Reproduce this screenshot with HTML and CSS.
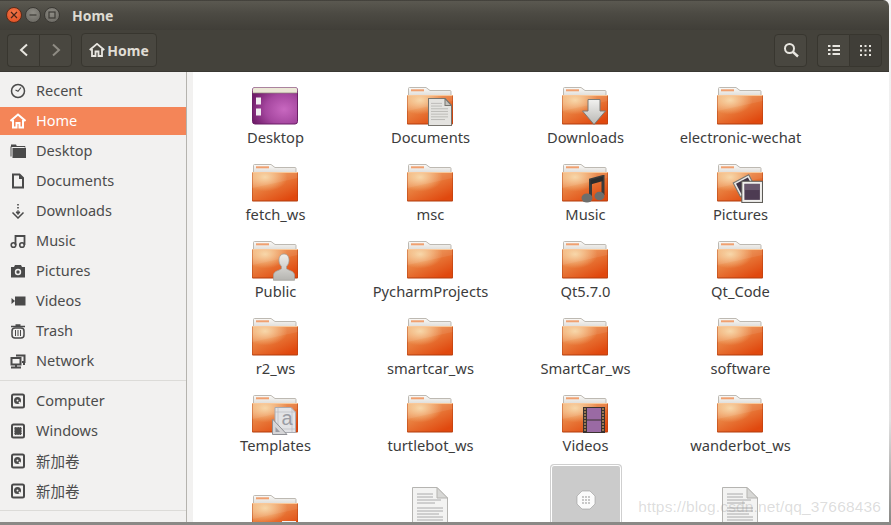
FILE: index.html
```html
<!DOCTYPE html>
<html lang="en">
<head>
<meta charset="utf-8">
<title>Home</title>
<link rel="stylesheet" href="styles.css">
</head>
<body>
<svg class="defs" width="0" height="0" aria-hidden="true">
  <defs>
    <linearGradient id="fg" x1="0" y1="0" x2="0.75" y2="1">
      <stop offset="0" stop-color="#f3ab6e"/><stop offset=".45" stop-color="#e97f3f"/><stop offset="1" stop-color="#e0480e"/>
    </linearGradient>
    <radialGradient id="fh" cx=".28" cy=".18" r=".5">
      <stop offset="0" stop-color="#f8d8a8" stop-opacity=".95"/><stop offset="1" stop-color="#f7d09a" stop-opacity="0"/>
    </radialGradient>
    <radialGradient id="pg" cx=".7" cy=".6" r=".75">
      <stop offset="0" stop-color="#c868c0"/><stop offset=".55" stop-color="#a5479f"/><stop offset="1" stop-color="#701c6a"/>
    </radialGradient>
    <linearGradient id="tabg" x1="0" y1="0" x2="0" y2="1">
      <stop offset="0" stop-color="#fbfaf8"/><stop offset="1" stop-color="#dedcd8"/>
    </linearGradient>
    <symbol id="folder" viewBox="0 0 46 38">
      <path d="M1.500 8V1.500a1 1 0 0 1 1-1H19l4 3h20a1 1 0 0 1 1 1V9H1.500z" fill="url(#tabg)" stroke="#bdb9b2"/>
      <rect x="4" y="2.300" width="13" height="2" fill="#f0a070"/>
      <rect x="0" y="8" width="46" height="29.500" rx="1" fill="#b23c0d"/>
      <rect x="0.500" y="8" width="45" height="28.500" fill="url(#fg)"/>
      <rect x="0.500" y="8" width="45" height="28.500" fill="url(#fh)"/>
      <path d="M.5 24 45.500 14V8H.5z" fill="#fff" opacity=".08"/>
      <rect x="0.500" y="8" width="45" height="1" fill="#f9c89a"/>
    </symbol>
    <symbol id="page" viewBox="0 0 36 48">
      <path d="M.5.500H25L35.500 11V47.500H.5z" fill="#f3f3f2" stroke="#b5b4b1"/>
      <path d="M25 .5V11H35.500z" fill="#d8d8d6" stroke="#b5b4b1"/>
      <path d="M5 7h16M5 10h16M5 13h24M5 16h18M5 21h26M5 24h26M5 27h22M5 30h26M5 33h26M5 36h20M5 40h26M5 43h16" stroke="#a3a3a3" stroke-width=".9"/>
    </symbol>
    <symbol id="disk" viewBox="0 0 16 16">
      <rect x="2" y="1.500" width="12" height="13" rx="1.500" fill="none" stroke="currentColor" stroke-width="2"/>
      <circle cx="7.500" cy="7.500" r="3.500" fill="currentColor"/>
      <circle cx="7.500" cy="7.500" r="1" fill="#f2f1f0"/>
      <path d="M9 9l2.500 2.500" stroke="#f2f1f0" stroke-width="1.500"/>
    </symbol>
  </defs>
</svg>

<div class="window">
  <header class="titlebar">
    <div class="controls">
      <span class="ctl close"><svg viewBox="0 0 8 8"><path d="M1 1l6 6M7 1L1 7" stroke="#4a2418" stroke-width="1.200"/></svg></span>
      <span class="ctl"><svg viewBox="0 0 8 8"><path d="M.5 4h7" stroke="#3d3b36" stroke-width="1.200"/></svg></span>
      <span class="ctl"><svg viewBox="0 0 8 8"><rect x="1" y="1" width="6" height="6" fill="none" stroke="#3d3b36" stroke-width="1.200"/></svg></span>
    </div>
    <span class="wintitle">Home</span>
  </header>

  <div class="toolbar">
    <div class="btn-group">
      <button class="tbtn nav"><svg width="12" height="14" viewBox="0 0 12 14"><path d="M9 1.500 3 7l6 5.500" fill="none" stroke="#e8e6e0" stroke-width="2"/></svg></button>
      <button class="tbtn nav"><svg width="12" height="14" viewBox="0 0 12 14"><path d="M3 1.500 9 7l-6 5.500" fill="none" stroke="#8f8c84" stroke-width="2"/></svg></button>
    </div>
    <button class="tbtn path">
      <svg width="16" height="14" viewBox="0 0 16 14"><path d="M.7 7 8 .9 15.300 7M3 6v7h3.500V8.500h3V13H13V6" fill="none" stroke="#e8e6e0" stroke-width="1.800"/></svg>
      <span>Home</span>
    </button>
    <div class="spacer"></div>
    <button class="tbtn square"><svg width="16" height="16" viewBox="0 0 16 16"><circle cx="6.500" cy="6.500" r="4.500" fill="none" stroke="#e8e6e0" stroke-width="2"/><path d="M10 10l5 4.500" stroke="#e8e6e0" stroke-width="2.400"/></svg></button>
    <div class="btn-group views">
      <button class="tbtn nav"><svg width="12" height="10" viewBox="0 0 12 10"><path d="M0 1h2.500M4.500 1H12M0 5h2.500M4.500 5H12M0 9h2.500M4.500 9H12" stroke="#e8e6e0" stroke-width="2"/></svg></button>
      <button class="tbtn nav active"><svg width="11" height="11" viewBox="0 0 11 11" fill="#e8e6e0"><rect width="2" height="2"/><rect x="4.500" width="2" height="2"/><rect x="9" width="2" height="2"/><rect y="4.500" width="2" height="2"/><rect x="4.500" y="4.500" width="2" height="2"/><rect x="9" y="4.500" width="2" height="2"/><rect y="9" width="2" height="2"/><rect x="4.500" y="9" width="2" height="2"/><rect x="9" y="9" width="2" height="2"/></svg></button>
    </div>
  </div>

  <div class="body">
    <nav class="sidebar">
      <a class="place"><svg class="sico" viewBox="0 0 16 16"><circle cx="8" cy="8" r="6.500" fill="none" stroke="currentColor" stroke-width="1.500"/><path d="M11 4.500 8 8.300 5.500 7" fill="none" stroke="currentColor" stroke-width="1.200"/></svg><span>Recent</span></a>
      <a class="place selected"><svg class="sico" viewBox="0 0 16 16"><path d="M.5 8 8 1.500 15.500 8M3 7v7.500h3.500V10h3v4.500H13V7" fill="none" stroke="currentColor" stroke-width="2"/></svg><span>Home</span></a>
      <a class="place"><svg class="sico" viewBox="0 0 16 16"><path d="M1 1.500h5l1 2H1z" fill="currentColor"/><path d="M1 3.500v10M1 3.500h14v1" stroke="currentColor" fill="none"/><rect x="2.500" y="5" width="13.500" height="10" fill="currentColor"/></svg><span>Desktop</span></a>
      <a class="place"><svg class="sico" viewBox="0 0 16 16"><path d="M3 1.500h6.500L13 5v9.500H3z" fill="none" stroke="currentColor" stroke-width="2"/><path d="M9 1.500V6h4.500" fill="currentColor"/></svg><span>Documents</span></a>
      <a class="place"><svg class="sico" viewBox="0 0 16 16"><path d="M8 1v1.500M8 4v1.500" stroke="currentColor" stroke-width="1.600"/><path d="M8 7v3M6 9h4L8 11.500z" fill="currentColor" stroke="currentColor"/><path d="M2.500 9.500 8 15l5.500-5.500" fill="none" stroke="currentColor" stroke-width="1.500"/></svg><span>Downloads</span></a>
      <a class="place"><svg class="sico" viewBox="0 0 16 16"><circle cx="3.500" cy="12" r="2.300" fill="none" stroke="currentColor" stroke-width="1.600"/><circle cx="12" cy="12" r="2.300" fill="none" stroke="currentColor" stroke-width="1.600"/><path d="M5.500 12V3h9v9" fill="none" stroke="currentColor" stroke-width="1.800"/></svg><span>Music</span></a>
      <a class="place"><svg class="sico" viewBox="0 0 16 16"><path d="M1 4h3l1-2h6l1 2h3v10.500H1z" fill="currentColor"/><circle cx="8" cy="9" r="3.200" fill="#f2f1f0"/><circle cx="8" cy="9" r="1.700" fill="currentColor"/></svg><span>Pictures</span></a>
      <a class="place"><svg class="sico" viewBox="0 0 16 16"><rect x="5" y="3.500" width="10.500" height="9" fill="currentColor"/><path d="M1.500 5 5 8l-3.500 3z" fill="currentColor"/></svg><span>Videos</span></a>
      <a class="place"><svg class="sico" viewBox="0 0 16 16"><path d="M1 3.500h14M5.500 2h5" stroke="currentColor" stroke-width="1.500"/><rect x="2" y="5" width="12" height="10" rx="3" fill="none" stroke="currentColor" stroke-width="1.500"/><path d="M5.500 7v6M8 7v6M10.500 7v6" stroke="currentColor"/></svg><span>Trash</span></a>
      <a class="place"><svg class="sico" viewBox="0 0 16 16"><rect x="1.500" y="5" width="9" height="6.500" fill="none" stroke="currentColor" stroke-width="2"/><path d="M1 14.500h10M6 12v2" stroke="currentColor" stroke-width="2"/><path d="M6 2.500h8.500v6.500H12M13 11h2" fill="none" stroke="currentColor" stroke-width="2"/></svg><span>Network</span></a>
      <hr class="sep">
      <a class="place"><svg class="sico"><use href="#disk"/></svg><span>Computer</span></a>
      <a class="place"><svg class="sico" viewBox="0 0 16 16"><rect x="2" y="1.500" width="12" height="13" rx="1.500" fill="none" stroke="currentColor" stroke-width="2"/><rect x="4.800" y="4.500" width="6.400" height="7" fill="currentColor" stroke="currentColor" stroke-dasharray="1 .7"/></svg><span>Windows</span></a>
      <a class="place"><svg class="sico"><use href="#disk"/></svg><span class="cjk">新加卷</span></a>
      <a class="place"><svg class="sico"><use href="#disk"/></svg><span class="cjk">新加卷</span></a>
      <hr class="sep">
    </nav>

    <main class="files">
      <div class="grid">
        <figure class="item">
          <svg class="ficon" viewBox="0 0 46 38"><rect x=".5" y=".5" width="45" height="36.500" rx="2.500" fill="url(#pg)" stroke="#6b1f66"/><path d="M.8 4a2.500 2.500 0 0 1 2.200-3.500h40a2.500 2.500 0 0 1 2.200 3.500v2H.8z" fill="#ebe7d6"/><path d="M.8 6h44.400" stroke="#8d8878" stroke-width=".7"/><path d="M4 10.500h5v7H4zM4 21.500h5v7H4z" fill="#f1ecf1"/></svg>
          <figcaption>Desktop</figcaption>
        </figure>
        <figure class="item">
          <div class="stack"><svg class="ficon"><use href="#folder"/></svg>
            <svg class="emblem doc" viewBox="0 0 24 26" preserveAspectRatio="none"><path d="M.5.500H17L23.500 7V25.500H.5z" fill="#e4e3e0" stroke="#77756f"/><path d="M17 .5V7H23.500z" fill="#c4c2bd" stroke="#77756f"/><path d="M3 5h11M3 7.500h11M3 10h17M3 12.500h17M3 15h17M3 17.500h17M3 20h14" stroke="#a4a3a0" stroke-width=".6"/></svg></div>
          <figcaption>Documents</figcaption>
        </figure>
        <figure class="item">
          <div class="stack"><svg class="ficon"><use href="#folder"/></svg>
            <svg class="emblem arrow" viewBox="0 0 24 26"><defs><linearGradient id="ag" x1="0" y1="0" x2="0" y2="1"><stop offset="0" stop-color="#f2f2f0"/><stop offset="1" stop-color="#b9b8b4"/></linearGradient></defs><path d="M6 .500h12V12h5.500L12 25.500.5 12H6z" fill="url(#ag)" stroke="#7d7b76"/></svg></div>
          <figcaption>Downloads</figcaption>
        </figure>
        <figure class="item"><svg class="ficon"><use href="#folder"/></svg><figcaption>electronic-wechat</figcaption></figure>

        <figure class="item"><svg class="ficon"><use href="#folder"/></svg><figcaption>fetch_ws</figcaption></figure>
        <figure class="item"><svg class="ficon"><use href="#folder"/></svg><figcaption>msc</figcaption></figure>
        <figure class="item">
          <div class="stack"><svg class="ficon"><use href="#folder"/></svg>
            <svg class="emblem music" viewBox="0 0 24 28"><path d="M9.500 22V5L22 1.500V20" fill="none" stroke="#3b3b3b" stroke-width="3"/><path d="M9.500 5 22 1.500V6L9.500 9.500z" fill="#2c2c2c"/><ellipse cx="6" cy="23" rx="5.500" ry="4.600" fill="#6e6e6c"/><ellipse cx="18.500" cy="21" rx="5" ry="4.300" fill="#6e6e6c"/></svg></div>
          <figcaption>Music</figcaption>
        </figure>
        <figure class="item">
          <div class="stack"><svg class="ficon"><use href="#folder"/></svg>
            <svg class="emblem pics" viewBox="0 0 30 28"><g transform="rotate(-28 12 12)"><rect x="4" y="4" width="17" height="15" fill="#e9e8e6" stroke="#77756f"/><rect x="6" y="6" width="13" height="11" fill="#3f3344"/></g><rect x="9.500" y="7" width="20" height="20.500" fill="#f0efed" stroke="#5d5b56"/><rect x="12" y="9.500" width="15" height="15.500" fill="#4d3b52"/><rect x="12" y="9.500" width="15" height="6" fill="#7d6a80" opacity=".6"/></svg></div>
          <figcaption>Pictures</figcaption>
        </figure>

        <figure class="item">
          <div class="stack"><svg class="ficon"><use href="#folder"/></svg>
            <svg class="emblem person" viewBox="0 0 24 30"><defs><linearGradient id="pp" x1="0" y1="0" x2="0" y2="1"><stop offset="0" stop-color="#f0efec"/><stop offset="1" stop-color="#b5b4b0"/></linearGradient></defs><path d="M12 .8c3.600 0 5.500 3 5.500 6.700 0 3-1 5-2.700 6.800v2.700c2.800 2 8 2.300 8.700 6.500V29.500H.5V23.500c.7-4.200 5.900-4.500 8.700-6.500v-2.700C7.500 12.500 6.500 10.500 6.500 7.500 6.500 3.800 8.400.8 12 .8z" fill="url(#pp)" stroke="#9f9d98" stroke-width=".8"/></svg></div>
          <figcaption>Public</figcaption>
        </figure>
        <figure class="item"><svg class="ficon"><use href="#folder"/></svg><figcaption>PycharmProjects</figcaption></figure>
        <figure class="item"><svg class="ficon"><use href="#folder"/></svg><figcaption>Qt5.7.0</figcaption></figure>
        <figure class="item"><svg class="ficon"><use href="#folder"/></svg><figcaption>Qt_Code</figcaption></figure>

        <figure class="item"><svg class="ficon"><use href="#folder"/></svg><figcaption>r2_ws</figcaption></figure>
        <figure class="item"><svg class="ficon"><use href="#folder"/></svg><figcaption>smartcar_ws</figcaption></figure>
        <figure class="item"><svg class="ficon"><use href="#folder"/></svg><figcaption>SmartCar_ws</figcaption></figure>
        <figure class="item"><svg class="ficon"><use href="#folder"/></svg><figcaption>software</figcaption></figure>

        <figure class="item">
          <div class="stack"><svg class="ficon"><use href="#folder"/></svg>
            <svg class="emblem tmpl" viewBox="0 0 24 28"><path d="M3 .500H19L23.500 5V25.500H3z" fill="#e2e3e6" stroke="#a9abb2"/><path d="M6 .5V25.500M3 5H23.500M20 .5V25.500M3 22H23.500" stroke="#b5b7bd" stroke-width=".6"/><path d="M.5 12 15 27.500H.5z" fill="#d6d6d8" stroke="#8f9095"/><path d="M3.500 20l4.500 5H3.500z" fill="#9a9ba3"/></svg>
            <span class="tmpl-a">a</span></div>
          <figcaption>Templates</figcaption>
        </figure>
        <figure class="item"><svg class="ficon"><use href="#folder"/></svg><figcaption>turtlebot_ws</figcaption></figure>
        <figure class="item">
          <div class="stack"><svg class="ficon"><use href="#folder"/></svg>
            <svg class="emblem film" viewBox="0 0 22 26"><rect width="22" height="26" fill="#3a3330"/><rect x="4" y="1" width="14" height="11.500" fill="#9a6aa4"/><rect x="4" y="13.500" width="14" height="11.500" fill="#9a6aa4"/><path d="M1 2h2M1 5h2M1 8h2M1 11h2M1 14h2M1 17h2M1 20h2M1 23h2M19 2h2M19 5h2M19 8h2M19 11h2M19 14h2M19 17h2M19 20h2M19 23h2" stroke="#b88f5e" stroke-width="1.500"/></svg></div>
          <figcaption>Videos</figcaption>
        </figure>
        <figure class="item"><svg class="ficon"><use href="#folder"/></svg><figcaption>wanderbot_ws</figcaption></figure>

        <figure class="item">
          <div class="stack late"><svg class="ficon"><use href="#folder"/></svg>
            <svg class="emblem term" viewBox="0 0 14 10"><rect x=".5" y=".5" width="13" height="9" fill="#2b2b2b" stroke="#f2f2f2"/></svg></div>
        </figure>
        <figure class="item"><svg class="ficon pagei"><use href="#page"/></svg></figure>
        <figure class="item thumb-cell">
          <div class="thumb"><svg width="20" height="20" viewBox="0 0 20 20"><path d="M6 1h8l5 5v8l-5 5H6l-5-5V6z" fill="#fbfbfb" stroke="#9b9b9b" stroke-width=".6"/><g fill="#b0b0b0"><circle cx="7" cy="7" r=".9"/><circle cx="10" cy="7" r=".9"/><circle cx="13" cy="7" r=".9"/><circle cx="7" cy="10" r=".9"/><circle cx="10" cy="10" r=".9"/><circle cx="13" cy="10" r=".9"/><circle cx="7" cy="13" r=".9"/><circle cx="10" cy="13" r=".9"/><circle cx="13" cy="13" r=".9"/></g></svg></div>
        </figure>
        <figure class="item"><svg class="ficon pagei"><use href="#page"/></svg></figure>
      </div>
      <span class="watermark">https://blog.csdn.net/qq_37668436</span>
    </main>
  </div>
</div>
</body>
</html>
```

FILE: styles.css
```css
* { box-sizing: border-box; }
html, body { margin: 0; height: 100%; }
body {
  width: 891px;
  height: 525px;
  overflow: hidden;
  background: linear-gradient(#f4f4f4 0, #e2e2e2 80%, #8a8986 99.4%);
  font-family: "Noto Sans", "Noto Sans CJK SC", sans-serif;
  padding: 0 2px 3px 0;
}
.defs { position: absolute; }

.window { height: 100%; display: flex; flex-direction: column; overflow: hidden; border-radius: 0 6px 0 0; }

.titlebar {
  height: 30px;
  flex: none;
  display: flex;
  align-items: center;
  gap: 12px;
  padding: 0 0 0 6px;
  background: linear-gradient(#3a3833 0, #5a5850 5%, #4c4a43 45%, #403e38 100%);
}
.controls { display: flex; gap: 3px; }
.ctl {
  width: 16px; height: 16px; border-radius: 50%;
  background: radial-gradient(circle at 50% 35%, #8e8c85, #66645e);
  border: 1px solid #3b3934;
  display: flex; align-items: center; justify-content: center;
}
.ctl svg { width: 8px; height: 8px; }
.close { background: radial-gradient(circle at 50% 35%, #f5784a, #de4a1e); border-color: #5a2c1a; }
.wintitle { color: #dedbd2; font-weight: 700; font-size: 14px; }

.toolbar {
  height: 42px;
  flex: none;
  display: flex;
  align-items: center;
  gap: 9px;
  padding: 3px 7px 4px 7px;
  background: #44423b;
  border-bottom: 1px solid #3a3833;
}
.spacer { flex: 1; }
.tbtn {
  height: 33px;
  display: flex; align-items: center; justify-content: center;
  background: #494740;
  border: 1px solid #38362f;
  border-radius: 4px;
  color: #e0ddd5;
  font: 700 14px "Noto Sans", sans-serif;
  padding: 0;
}
.btn-group { display: flex; }
.btn-group .tbtn { border-radius: 0; width: 33px; }
.btn-group .tbtn:first-child { border-radius: 4px 0 0 4px; border-right: 0; width: 32px; }
.btn-group .tbtn:last-child { border-radius: 0 4px 4px 0; }
.btn-group .nav:last-child { border-left: 1px solid #38362f; }
.active { background: #403e38; }
.views { margin-left: 1px; }
.path { width: 76px; gap: 2px; height: 34px; }
.square { width: 33px; }

.body { flex: 1; min-height: 0; display: flex; background: #fff; }

.sidebar {
  width: 193px;
  flex: none;
  background: #f2f1f0;
  padding: 5px 6px 0 0;
  position: relative;
  display: flex;
  flex-direction: column;
}
.sidebar::after {
  content: "";
  position: absolute;
  top: 0; bottom: 0; left: 186px;
  width: 1px;
  background: #b5b3ae;
}
.place {
  height: 28px;
  margin-bottom: 2px;
  flex: none;
  display: flex;
  align-items: center;
  gap: 10px;
  padding-left: 10px;
  color: #4c4c4c;
  font-size: 14.5px;
}
.place span { margin-top: -2px; }
.sico { width: 16px; height: 16px; flex: none; color: #4a4a4a; }
.selected { background: #f48558; color: #fff; }
.selected .sico { color: #fff; }
.cjk { font-family: "Noto Sans CJK SC", sans-serif; }
.sep { width: 100%; margin: 3px 0 6px; border: 0; border-top: 1px solid #dcdbd8; flex: none; }

.files { flex: 1; min-width: 0; position: relative; overflow: hidden; }
.grid {
  display: grid;
  grid-template-columns: repeat(4, 155px);
  grid-template-rows: repeat(5, 77px) 100px;
  padding: 15px 0 0 5px;
}
.item { margin: 0; display: flex; flex-direction: column; align-items: center; min-width: 0; }
.ficon { width: 46px; height: 38px; display: block; flex: none; }
.item > .ficon, .item > .stack { margin-right: 2px; }
figcaption { margin-top: 2px; font-size: 14.7px; line-height: 20px; color: #3c3c3c; white-space: nowrap; }

.stack { position: relative; width: 46px; height: 38px; flex: none; }
.late { margin-top: 23px; }
.emblem { position: absolute; }
.doc { left: 21px; top: 11px; width: 24px; height: 28px; }
.arrow { left: 20px; top: 12px; width: 24px; height: 26px; }
.music { left: 19px; top: 11px; width: 24px; height: 28px; }
.pics { left: 15px; top: 10px; width: 31px; height: 29px; }
.person { left: 21px; top: 12px; width: 22px; height: 28px; }
.tmpl { left: 20px; top: 12px; width: 24px; height: 28px; }
.tmpl-a { position: absolute; left: 30px; top: 13px; font: 20px/20px "Liberation Sans", sans-serif; color: #9a9ca4; }
.film { left: 21px; top: 12px; width: 22px; height: 26px; }
.term { left: 30px; top: 26px; width: 14px; height: 10px; }

.thumb-cell { position: relative; }
.thumb {
  position: absolute;
  top: -7px;
  width: 70px;
  height: 70px;
  background: #cbcbcb;
  border: 1px solid #fff;
  box-shadow: 0 0 0 1px #cfcfcf;
  border-radius: 3px;
  display: flex;
  align-items: center;
  justify-content: center;
}
.pagei { width: 36px; height: 48px; margin-top: 15px; }

.watermark {
  position: absolute;
  right: 8px;
  bottom: 6px;
  font: 15.5px "Liberation Sans", sans-serif;
  color: rgba(150, 150, 150, .32);
  letter-spacing: .15px;
}
```
